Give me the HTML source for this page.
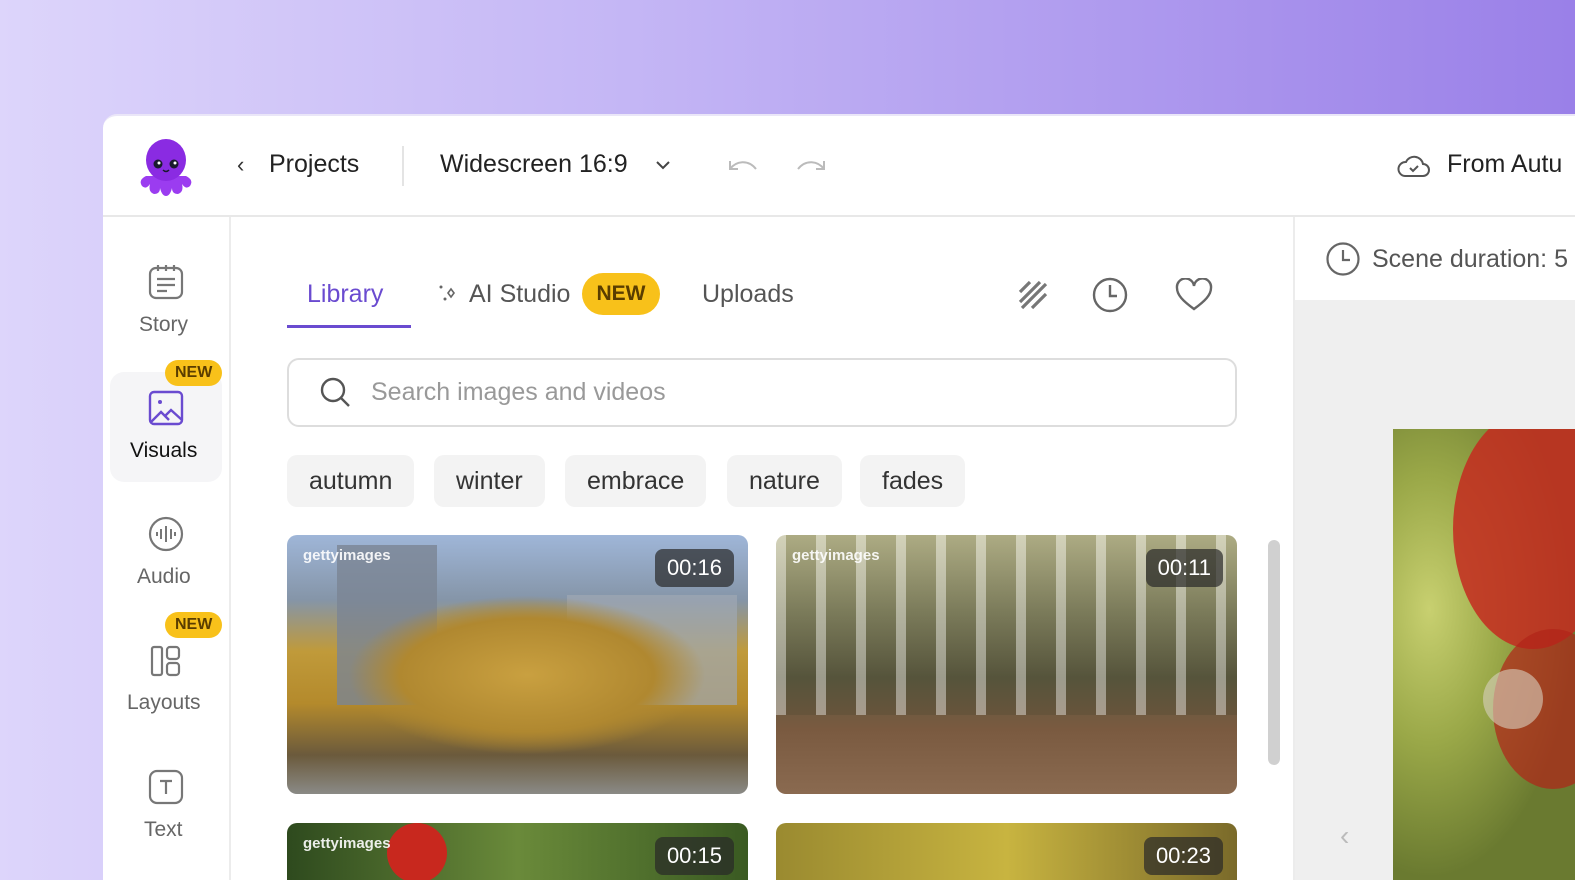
<!DOCTYPE html>
<html><head><style>
*{margin:0;padding:0;box-sizing:border-box}
html,body{width:1575px;height:880px;overflow:hidden}
body{position:relative;font-family:"Liberation Sans",Arial,sans-serif;background:linear-gradient(90deg,#ddd5fb 0%,#c4b6f5 40%,#9a80e8 100%)}
.app{position:absolute;left:103px;top:114px;width:1472px;height:766px;background:#fff;border-radius:14px 0 0 0;border-top:2px solid #eae6f8}
.abs{position:absolute}
.t{position:absolute;white-space:nowrap}
.new{position:absolute;background:#f8c11a;color:#5a3d00;font-weight:bold;border-radius:16px;font-size:16px;padding:4px 10px}
.chip{position:absolute;top:455px;height:52px;background:#f3f3f3;border-radius:10px;font-size:25px;color:#333;line-height:52px;padding:0 22px}
.card{position:absolute;width:461px;height:259px;border-radius:10px;overflow:hidden}
.card2{height:57px;border-radius:10px 10px 0 0}
.dur{position:absolute;right:14px;top:14px;background:rgba(40,40,40,.7);color:#fff;font-size:22px;padding:6px 12px;border-radius:8px}
.gi{position:absolute;left:16px;top:12px;color:#fff;font-size:15px;font-weight:bold;opacity:.9}
</style></head><body>
<div class="app"></div>
<svg class="abs" style="left:134px;top:134px" width="64" height="64" viewBox="0 0 64 64">
<path d="M12 42 q-8 4 -4 10 q4 4 8 -2 q-2 8 4 10 q6 0 6 -6 q2 8 6 8 q4 0 6 -8 q0 6 6 6 q6 -2 4 -10 q4 6 8 2 q4 -6 -4 -10z" fill="#9b3cf0"/>
<ellipse cx="32" cy="26" rx="20" ry="21" fill="#8a2be2"/>
<circle cx="24" cy="30" r="4.5" fill="#1a1a2e"/><circle cx="40" cy="30" r="4.5" fill="#1a1a2e"/>
<circle cx="25" cy="29" r="1.5" fill="#fff"/><circle cx="41" cy="29" r="1.5" fill="#fff"/>
<path d="M29 36 q3 3 6 0" stroke="#1a1a2e" stroke-width="1.5" fill="none"/>
</svg>
<div class="t" style="left:237px;top:152px;font-size:22px;color:#333">‹</div>
<div class="t" style="left:269px;top:150px;font-size:25px;color:#222">Projects</div>
<div class="abs" style="left:402px;top:146px;width:2px;height:40px;background:#e4e4e4"></div>
<div class="t" style="left:440px;top:150px;font-size:25px;color:#222">Widescreen 16:9</div>
<svg class="abs" style="left:655px;top:159px" width="16" height="12"><path d="M2 3l6 6 6-6" stroke="#444" stroke-width="2" fill="none"/></svg>
<svg class="abs" style="left:724px;top:155px" width="36" height="22"><path d="M6 6v8h8M6 14c6-8 18-10 26 0" stroke="#bbb" stroke-width="2" fill="none"/></svg>
<svg class="abs" style="left:794px;top:155px" width="36" height="22"><path d="M30 6v8h-8M30 14c-6-8-18-10-26 0" stroke="#bbb" stroke-width="2" fill="none"/></svg>
<svg class="abs" style="left:1396px;top:150px" width="36" height="30"><path d="M9 26h18a6 6 0 0 0 0-12 9 9 0 0 0-17-2 7 7 0 0 0-1 14z" stroke="#555" stroke-width="2" fill="none"/><path d="M14 18l3 3 5-5" stroke="#555" stroke-width="2" fill="none"/></svg>
<div class="t" style="left:1447px;top:150px;font-size:25px;color:#222">From Autu</div>
<div class="abs" style="left:103px;top:215px;width:1472px;height:2px;background:#e8e8e8"></div>
<div class="abs" style="left:229px;top:217px;width:2px;height:663px;background:#ececec"></div>
<svg class="abs" style="left:147px;top:263px" width="38" height="38" viewBox="0 0 38 38"><rect x="3" y="5" width="32" height="30" rx="6" stroke="#777" stroke-width="2.2" fill="none"/><path d="M11 2v6M19 2v6M27 2v6M10 16h18M10 22h18M10 28h10" stroke="#777" stroke-width="2.2"/></svg>
<div class="t" style="left:139px;top:313px;font-size:21px;color:#666">Story</div>
<div class="abs" style="left:110px;top:372px;width:112px;height:110px;background:#f5f5f7;border-radius:14px"></div>
<div class="new" style="left:165px;top:360px">NEW</div>
<svg class="abs" style="left:148px;top:390px" width="36" height="36" viewBox="0 0 36 36"><rect x="2" y="2" width="32" height="32" rx="4" stroke="#6a4bd0" stroke-width="2.4" fill="none"/><circle cx="12" cy="12" r="2" fill="#6a4bd0"/><path d="M3 32l10-10 8 8M17 26l6-6 11 10" stroke="#6a4bd0" stroke-width="2.4" fill="none"/></svg>
<div class="t" style="left:130px;top:439px;font-size:21px;color:#111">Visuals</div>
<svg class="abs" style="left:148px;top:516px" width="36" height="36" viewBox="0 0 36 36"><circle cx="18" cy="18" r="16" stroke="#777" stroke-width="2.2" fill="none"/><path d="M9 16v4M13 13v10M18 10v16M23 13v10M27 16v4" stroke="#777" stroke-width="2"/></svg>
<div class="t" style="left:137px;top:565px;font-size:21px;color:#666">Audio</div>
<div class="new" style="left:165px;top:612px">NEW</div>
<svg class="abs" style="left:150px;top:645px" width="32" height="32" viewBox="0 0 32 32"><rect x="2" y="2" width="10" height="28" rx="2" stroke="#777" stroke-width="2.2" fill="none"/><rect x="17" y="2" width="12" height="12" rx="3" stroke="#777" stroke-width="2.2" fill="none"/><rect x="17" y="18" width="12" height="12" rx="3" stroke="#777" stroke-width="2.2" fill="none"/></svg>
<div class="t" style="left:127px;top:691px;font-size:21px;color:#666">Layouts</div>
<svg class="abs" style="left:148px;top:769px" width="36" height="36" viewBox="0 0 36 36"><rect x="2" y="2" width="32" height="32" rx="7" stroke="#777" stroke-width="2.2" fill="none"/><path d="M12 12h12M18 12v13" stroke="#777" stroke-width="2.2"/></svg>
<div class="t" style="left:144px;top:818px;font-size:21px;color:#666">Text</div>
<div class="t" style="left:307px;top:280px;font-size:25px;color:#6a4bd0">Library</div>
<div class="abs" style="left:287px;top:325px;width:124px;height:3px;background:#6a4bd0"></div>
<svg class="abs" style="left:436px;top:282px" width="24" height="24"><circle cx="5" cy="5" r="1.5" fill="#666"/><circle cx="9" cy="17" r="1.5" fill="#666"/><path d="M15 7l3 4-3 4-3-4z" stroke="#666" stroke-width="1.6" fill="none"/></svg>
<div class="t" style="left:469px;top:280px;font-size:25px;color:#555">AI Studio</div>
<div class="abs" style="left:582px;top:273px;width:78px;height:42px;background:#f8c11a;border-radius:21px;color:#5a3d00;font-weight:bold;font-size:21px;text-align:center;line-height:42px">NEW</div>
<div class="t" style="left:702px;top:280px;font-size:25px;color:#555">Uploads</div>
<svg class="abs" style="left:1018px;top:280px" width="30" height="30"><path d="M2 12L12 2M2 22L22 2M4 28L28 4M14 28L28 14" stroke="#777" stroke-width="3.2"/></svg>
<svg class="abs" style="left:1091px;top:276px" width="38" height="38"><circle cx="19" cy="19" r="16" stroke="#666" stroke-width="2.4" fill="none"/><path d="M19 9v11h7" stroke="#666" stroke-width="2.4" fill="none"/></svg>
<svg class="abs" style="left:1175px;top:278px" width="38" height="34"><path d="M19 31C8 23 2 17 2 10a8 8 0 0 1 17-2 8 8 0 0 1 17 2c0 7-6 13-17 21z" stroke="#666" stroke-width="2.4" fill="none"/></svg>
<div class="abs" style="left:287px;top:358px;width:950px;height:69px;border:2px solid #ddd;border-radius:12px"></div>
<svg class="abs" style="left:319px;top:376px" width="34" height="34"><circle cx="14" cy="14" r="11" stroke="#555" stroke-width="2.4" fill="none"/><path d="M22 22l8 8" stroke="#555" stroke-width="2.4"/></svg>
<div class="t" style="left:371px;top:378px;font-size:25px;color:#999">Search images and videos</div>
<div class="chip" style="left:287px">autumn</div>
<div class="chip" style="left:434px">winter</div>
<div class="chip" style="left:565px">embrace</div>
<div class="chip" style="left:727px">nature</div>
<div class="chip" style="left:860px">fades</div>
<div class="card" style="left:287px;top:535px;background:linear-gradient(180deg,#9fb6d8 0%,#8595a8 25%,#c09a3a 45%,#b48a2c 65%,#6b5a3c 85%,#8a8a86 100%)">
<div class="abs" style="left:50px;top:10px;width:100px;height:160px;background:#7a8494;opacity:.8"></div>
<div class="abs" style="left:280px;top:60px;width:170px;height:110px;background:#a0a8b4;opacity:.7"></div>
<div class="abs" style="left:60px;top:60px;width:360px;height:160px;background:radial-gradient(ellipse,#c9a040 0%,#b08830 50%,rgba(0,0,0,0) 70%)"></div>
<div class="gi">gettyimages</div><div class="dur">00:16</div></div>
<div class="card" style="left:776px;top:535px;background:linear-gradient(180deg,#c9c79a 0%,#8a8a66 30%,#5c5a40 55%,#7a5a40 75%,#8a6a50 100%)">
<div class="abs" style="left:0;top:0;width:461px;height:180px;background:repeating-linear-gradient(90deg,rgba(220,220,215,.5) 0 10px,rgba(60,60,40,.2) 10px 40px)"></div>
<div class="gi">gettyimages</div><div class="dur">00:11</div></div>
<div class="card card2" style="left:287px;top:823px;background:linear-gradient(90deg,#2e4a1e,#6a8a3a 50%,#3a5a22)">
<div class="abs" style="left:100px;top:0;width:60px;height:60px;border-radius:50%;background:#c8281e"></div>
<div class="gi">gettyimages</div><div class="dur">00:15</div></div>
<div class="card card2" style="left:776px;top:823px;background:linear-gradient(90deg,#9a8a30,#c8b440 50%,#7a6a2a)">
<div class="dur">00:23</div></div>
<div class="abs" style="left:1268px;top:540px;width:12px;height:225px;background:#d0d0d0;border-radius:6px"></div>
<div class="abs" style="left:1293px;top:217px;width:2px;height:663px;background:#ececec"></div>
<div class="abs" style="left:1295px;top:300px;width:280px;height:580px;background:#efefef"></div>
<svg class="abs" style="left:1325px;top:241px" width="36" height="36"><circle cx="18" cy="18" r="15.5" stroke="#666" stroke-width="2.2" fill="none"/><path d="M18 9v10h7" stroke="#666" stroke-width="2.2" fill="none"/></svg>
<div class="t" style="left:1372px;top:245px;font-size:25px;color:#555">Scene duration: 5</div>
<div class="abs" style="left:1393px;top:429px;width:182px;height:451px;background:radial-gradient(ellipse at 20% 40%,#c8d070 0%,#9aa848 35%,#6a7a30 70%),#6a7a30;overflow:hidden">
<div class="abs" style="left:60px;top:-20px;width:160px;height:240px;border-radius:50%;background:#c42a20;opacity:.85"></div>
<div class="abs" style="left:100px;top:200px;width:120px;height:160px;border-radius:50%;background:#b02418;opacity:.7"></div>
<div class="abs" style="left:90px;top:240px;width:60px;height:60px;border-radius:50%;background:#d8d0c0;opacity:.6"></div>
</div>
<div class="t" style="left:1340px;top:820px;font-size:28px;color:#bbb">‹</div>
</body></html>
